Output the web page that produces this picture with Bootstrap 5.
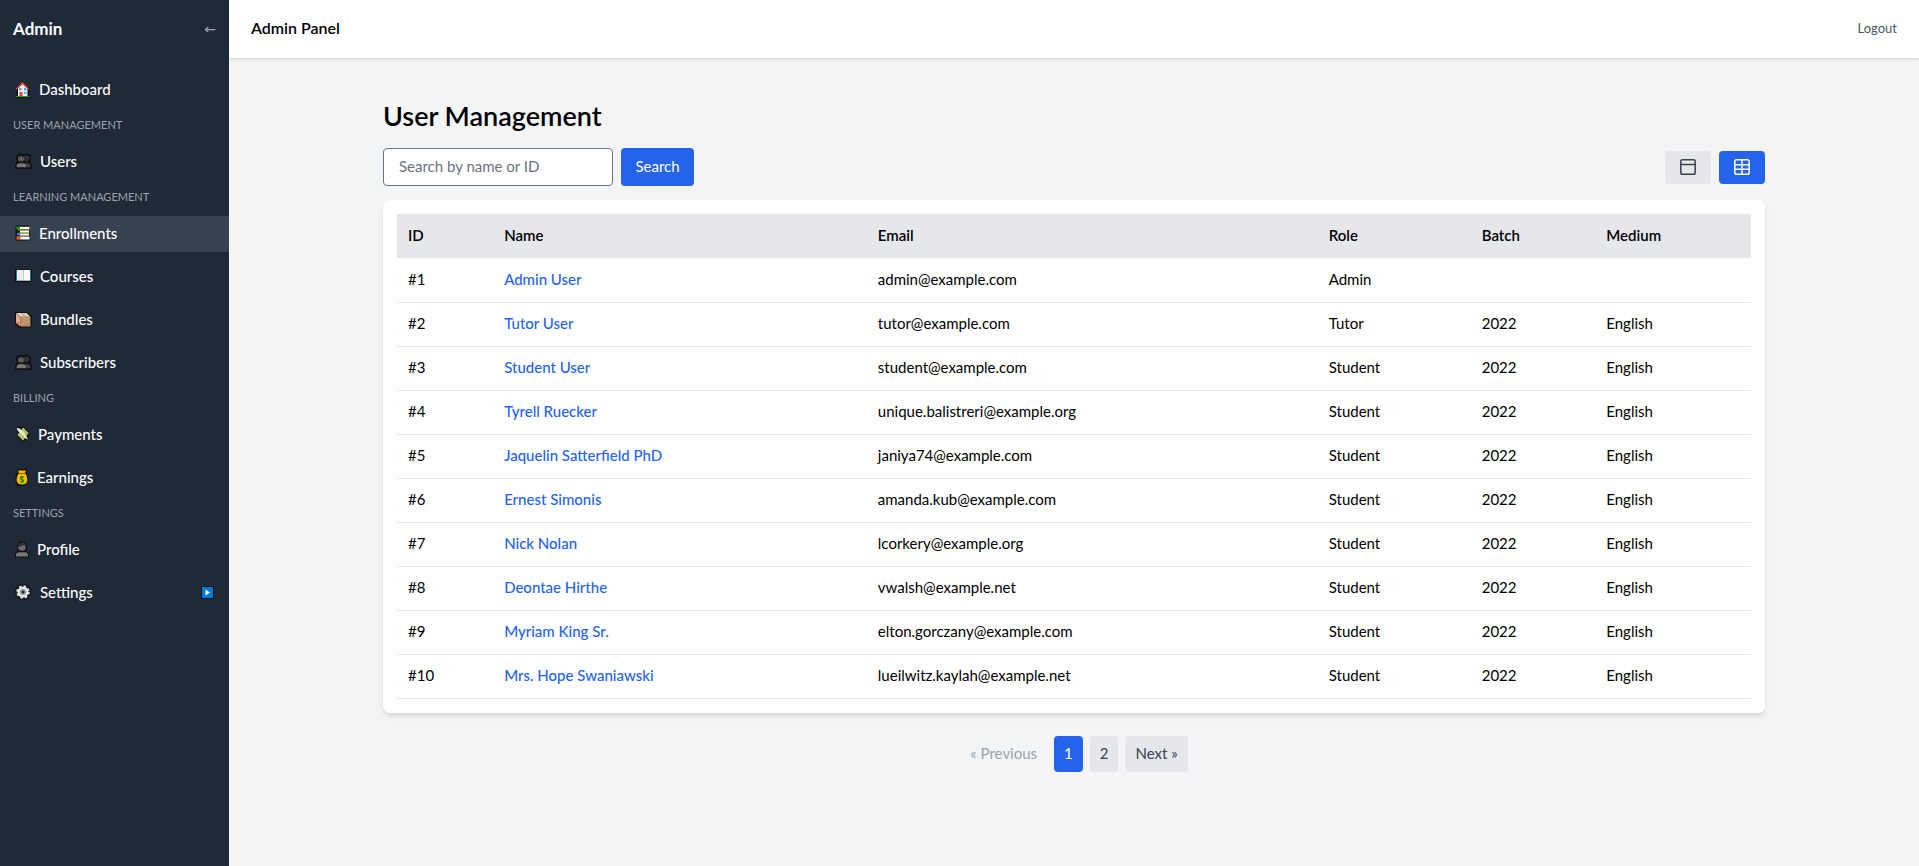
<!DOCTYPE html>
<html lang="en">
<head>
<meta charset="utf-8">
<meta name="viewport" content="width=device-width, initial-scale=1">
<title>Admin Panel</title>
<link href="https://cdn.jsdelivr.net/npm/bootstrap@5.3.0/dist/css/bootstrap.min.css" rel="stylesheet">
<style>
  body { font-family: Lato, "Liberation Sans", sans-serif; font-size: 15px; line-height: 22px; color: #000; background: #f3f4f6; }
  a { text-decoration: none; }
  .side { width: 229px; background: #1f2937; }
  .side-head { height: 57px; padding: 0 13px; }
  .side-head strong { font-size: 17px; }
  .collapse-btn { border: 0; padding: 0; background: none; color: #9ca3af; font-family: "DejaVu Sans", sans-serif; font-size: 14px; }
  .side-nav { gap: 7px; padding-top: 15px; }
  .side-link { height: 36px; padding: 0 15px 2px; color: #fff; font-weight: 500; }
  .side-link:hover, .side-link.active { background: #374151; }
  .side-link svg { flex: none; margin-right: 8px; }
  .side-link .side-caret { margin: 0 0 0 auto; }
  .side-label { height: 22px; padding: 0 13px 2px; font-size: 11px; color: #9ca3af; text-transform: uppercase; }
  .top { height: 58px; padding: 0 22px 2px; background: #fff; box-shadow: 0 1px 3px rgba(0,0,0,.1), 0 1px 2px rgba(0,0,0,.06); }
  .top h1 { font-size: 16px; font-weight: 600; }
  .logout { border: 0; padding: 0; background: none; font-size: 13px; color: #4b5563; }
  .page { max-width: 1382px; padding-top: 41px; }
  .page h2 { font-size: 27px; line-height: 34px; font-weight: 600; margin-bottom: 15px; }
  .tools { margin-bottom: 14px; }
  .tools form, .toggles { gap: 8px; }
  .search-box { width: 230px; height: 38px; padding: 0 15px 2px; font-size: 15px; border: 1px solid #6b7280; border-radius: 4px; }
  .search-box::placeholder { color: #6b7280; }
  .search-btn { width: 73px; height: 38px; padding: 0 0 2px; font-size: 15px; border-radius: 4px; }
  .fill-blue, .fill-blue:hover { background: #2563eb; color: #fff; }
  .fill-gray, .fill-gray:hover { background: #e5e7eb; color: #374151; }
  .toggles .btn { width: 46px; height: 33px; padding: 0; border: 0; border-radius: 4px; }
  .panel { padding: 14px; background: #fff; border-radius: 7px; box-shadow: 0 4px 6px -1px rgba(0,0,0,.1), 0 2px 4px -2px rgba(0,0,0,.1); }
  .users { table-layout: fixed; width: 100%; }
  .users th, .users td { height: 44px; padding: 0 11px 2px; }
  .users th { background: #e5e7eb; font-weight: 600; }
  .users td { border-bottom: 1px solid #e5e7eb; }
  .users a { color: #2563eb; font-weight: 500; }
  .pages { gap: 7px; margin-top: 23px; }
  .pages a, .pages span { display: block; padding: 6px 10px 8px; border-radius: 4px; }
  .pages .off { color: #9ca3af; }
  .c-id { width: 7.1%; } .c-name { width: 27.6%; } .c-mail { width: 33.3%; } .c-role { width: 11.3%; } .c-batch { width: 9.2%; }
</style>
</head>
<body>
<svg width="0" height="0" class="position-absolute" aria-hidden="true">
  <symbol id="people" viewBox="0 0 17 16">
    <path d="M1 15v-2.500Q1 9.800 4 9.500Q1.800 7.800 2 4.500Q2.300 1.600 5.500 1.500Q7.500 1.300 8.800 2.200Q14.500 0 15 4.500Q15.300 8 13.500 9.500Q16 10 16 12.500V15Z" fill="#161616" stroke="#0b0b0b" stroke-width="1.500"/>
    <path d="M9.500 14.300v-2Q9.500 10.300 12.500 10.300Q15.400 10.300 15.400 12.500v1.800Z" fill="#444"/>
    <circle cx="11.500" cy="5.300" r="3" fill="#333"/>
    <path d="M1.600 14.300v-1.600Q1.600 10.600 4 10.300h4.500Q11 10.600 11 12.700v1.600Z" fill="#777"/>
    <circle cx="6" cy="5.800" r="3" fill="#6a6a6a"/>
    <path d="M3 5Q4 2 6.500 2.500T9 5L6 3.800Z" fill="#333"/>
    <path d="M4.800 5.300v1M7.200 5.300v1M5 7.700h2" stroke="#222" stroke-width=".8"/>
  </symbol>
</svg>
<div class="d-flex min-vh-100">
  <aside class="side flex-shrink-0">
    <div class="side-head d-flex align-items-center justify-content-between text-white">
      <strong>Admin</strong>
      <button class="collapse-btn" type="button" aria-label="Collapse sidebar">←</button>
    </div>
    <nav class="side-nav d-flex flex-column">
      <a class="side-link d-flex align-items-center" href="#"><svg width="16" height="17" viewBox="0 0 16 17"><path d="M7.500 0L0 7.500 1.500 9v6H.5v2h14.500v-2h-1V9L15 7.500Z" fill="#101010"/><path d="M7.500 3L3 7.500V15h9.500V7.500Z" fill="#eee"/><path d="M1.200 8L7.500 1.700 13.800 8" fill="none" stroke="#e8483c" stroke-width="1.400"/><path d="M4 7h2.500v2.500H4zM9 7h2.500v2.500H9zM9 11h2.500v2H9z" fill="#37b8ee"/><path d="M4.500 11h3v4h-3z" fill="#e73b2f"/><path d="M1 15.500h13.500" stroke="#16a51c"/></svg>Dashboard</a>
      <div class="side-label d-flex align-items-center">User Management</div>
      <a class="side-link d-flex align-items-center" href="#"><svg width="17" height="16"><use href="#people"/></svg>Users</a>
      <div class="side-label d-flex align-items-center">Learning Management</div>
      <a class="side-link d-flex align-items-center active" href="#" aria-current="page"><svg width="16" height="16" viewBox="0 0 16 16"><rect x=".5" y=".5" width="14.500" height="15" rx="1.500" fill="#111"/><path d="M1.500 1.500h4v3h-4z" fill="#11a51b"/><path d="M5 1.800h9.500v2.400H5z" fill="#fff"/><path d="M3 5h11.500M3 8.200h11.500" stroke="#a5c817" stroke-width="1"/><path d="M5 5.600h9v2H5z" fill="#fff"/><path d="M2 8h3v2.500H2z" fill="#2486d8"/><path d="M5 8.800h9v1.800H5z" fill="#fff"/><path d="M1.500 11.300H6v3.400H1.500z" fill="#f05a1a"/><path d="M5.500 11.500h9v3h-9z" fill="#fff"/></svg>Enrollments</a>
      <a class="side-link d-flex align-items-center" href="#"><svg width="17" height="16" viewBox="0 0 17 16"><path d="M0 1.500h17v12.500H10l-1.500.8L7 14H0Z" fill="#101010"/><path d="M1 2.500h15v10.500H1z" fill="#2676a8"/><path d="M2 2h6.500v10.500H2z" fill="#ececec"/><path d="M8.500 2H15v10.500H8.500z" fill="#fff"/><path d="M8.200 3l.3 10 .3-10z" fill="#aaa"/></svg>Courses</a>
      <a class="side-link d-flex align-items-center" href="#"><svg width="17" height="17" viewBox="0 0 17 17"><path d="M0 1h11.500L17 5v10l-2 1.500H4.500L0 13Z" fill="#101010"/><path d="M1 2.500L5.500 6v9.500L1 12Z" fill="#e4a983"/><path d="M1 2h10.500l4 3.700H5.500Z" fill="#f2d0b2"/><path d="M5.500 6h10v9.500h-10z" fill="#bd946c"/><path d="M5.500 2l4 3.700h2.500L8 2z" fill="#a9b0ac"/><path d="M2.500 10.500l1.200 1v1.500l-1.200-1z" fill="#e2231a"/><path d="M12.500 14l1.500-1v1z" fill="#5a4630"/></svg>Bundles</a>
      <a class="side-link d-flex align-items-center" href="#"><svg width="17" height="16"><use href="#people"/></svg>Subscribers</a>
      <div class="side-label d-flex align-items-center">Billing</div>
      <a class="side-link d-flex align-items-center" href="#"><svg width="15" height="16" viewBox="0 0 15 16"><path d="M1 1h5l2-.5L14 6v8h-3l-3 2-6-6 .5-3Z" fill="#101010"/><path d="M8 1.500L13.500 7 8 14.500 2.500 9Z" fill="#c5d977"/><path d="M8 3.500L11.500 7 8 12 4.500 9Z" fill="none" stroke="#819c3d" stroke-width=".8"/><path d="M1.500 2Q5 1.500 7 4.500L13.500 13.500Q9 12.500 8 9L4.500 6.500Q2.500 5 1.500 2Z" fill="#f0f0e8"/></svg>Payments</a>
      <a class="side-link d-flex align-items-center" href="#"><svg width="14" height="17" viewBox="0 0 14 17"><path d="M2 0h10v4Q13.500 7 13.500 11T7 17 .5 11 3 4Z" fill="#101010"/><path d="M3 1.500h8L10 4q2.500 3 2.500 7Q12 15.500 7 15.500T1.500 11Q1.500 7 4 4Z" fill="#fdb900"/><path d="M4 4.500h6" stroke="#8f5a00" stroke-width=".9"/><path d="M9 8.200Q7 7 5.700 8.200T7 10.500t1.500 2Q7 13.800 5 12.700M7 6.800v7" fill="none" stroke="#188f20" stroke-width="1.200"/></svg>Earnings</a>
      <div class="side-label d-flex align-items-center">Settings</div>
      <a class="side-link d-flex align-items-center" href="#"><svg width="14" height="17" viewBox="0 0 14 17"><path d="M0 16.500V13q0-2 3-2.500Q1.500 8.500 1.800 4.500 3 .5 7 .5t5 4Q12.500 8 11 10.500q3 .5 3 2.500v3.500Z" fill="#111"/><circle cx="7" cy="6" r="3.800" fill="#6c6c6c"/><path d="M3 6Q3 1.800 7 1.700T11 6Q9 3.500 7.500 4.500T3 6Z" fill="#333"/><path d="M1 15.500V13q.5-1.500 3-1.700h6q2.500.2 3 1.700v2.500Z" fill="#777"/></svg>Profile</a>
      <a class="side-link d-flex align-items-center" href="#"><svg width="17" height="16" viewBox="0 0 17 16"><circle cx="8" cy="8" r="6.200" fill="none" stroke="#101010" stroke-width="3.600" stroke-dasharray="3.600 1.270"/><circle cx="8" cy="8" r="6.300" fill="#101010"/><circle cx="8" cy="8" r="5.900" fill="none" stroke="#ddd" stroke-width="1.800" stroke-dasharray="2.500 2.130"/><circle cx="8" cy="8" r="4.300" fill="#999" stroke="#e6e6e6" stroke-width="2.400"/><circle cx="8" cy="8" r="1.500" fill="#1f2937"/></svg>Settings<svg class="side-caret" width="13" height="13" viewBox="0 0 13 13"><path d="M0 0h13v13H0z" fill="#0a1420"/><path d="M1 1h11v11H1z" fill="#0078d7"/><path d="M4.500 3.500L9 6.500l-4.500 3z" fill="#fff"/></svg></a>
    </nav>
  </aside>
  <div class="flex-grow-1">
    <header class="top d-flex align-items-center justify-content-between">
      <h1 class="m-0">Admin Panel</h1>
      <button class="logout" type="button">Logout</button>
    </header>
    <main class="page mx-auto">
      <h2>User Management</h2>
      <div class="tools d-flex align-items-center justify-content-between">
        <form class="d-flex">
          <input class="search-box" type="text" placeholder="Search by name or ID" aria-label="Search by name or ID">
          <button class="btn search-btn fill-blue border-0" type="button">Search</button>
        </form>
        <div class="toggles d-flex">
          <button class="btn fill-gray d-flex align-items-center justify-content-center" type="button" aria-label="Card view"><svg width="16" height="16" viewBox="0 0 16 16" fill="none" stroke="currentColor" stroke-width="1.500"><rect x=".8" y=".8" width="14.400" height="14.400" rx="1.800"/><path d="M1 5.500h14"/></svg></button>
          <button class="btn fill-blue d-flex align-items-center justify-content-center" type="button" aria-label="Table view"><svg width="16" height="16" viewBox="0 0 16 16" fill="none" stroke="currentColor" stroke-width="1.500"><rect x=".8" y=".8" width="14.400" height="14.400" rx="1.800"/><path d="M1 5.700h14M1 10.300h14M8 1v14"/></svg></button>
        </div>
      </div>
      <div class="panel">
        <table class="users">
          <colgroup><col class="c-id"><col class="c-name"><col class="c-mail"><col class="c-role"><col class="c-batch"><col></colgroup>
          <thead><tr><th>ID</th><th>Name</th><th>Email</th><th>Role</th><th>Batch</th><th>Medium</th></tr></thead>
          <tbody>
            <tr><td>#1</td><td><a href="#">Admin User</a></td><td>admin@example.com</td><td>Admin</td><td></td><td></td></tr>
            <tr><td>#2</td><td><a href="#">Tutor User</a></td><td>tutor@example.com</td><td>Tutor</td><td>2022</td><td>English</td></tr>
            <tr><td>#3</td><td><a href="#">Student User</a></td><td>student@example.com</td><td>Student</td><td>2022</td><td>English</td></tr>
            <tr><td>#4</td><td><a href="#">Tyrell Ruecker</a></td><td>unique.balistreri@example.org</td><td>Student</td><td>2022</td><td>English</td></tr>
            <tr><td>#5</td><td><a href="#">Jaquelin Satterfield PhD</a></td><td>janiya74@example.com</td><td>Student</td><td>2022</td><td>English</td></tr>
            <tr><td>#6</td><td><a href="#">Ernest Simonis</a></td><td>amanda.kub@example.com</td><td>Student</td><td>2022</td><td>English</td></tr>
            <tr><td>#7</td><td><a href="#">Nick Nolan</a></td><td>lcorkery@example.org</td><td>Student</td><td>2022</td><td>English</td></tr>
            <tr><td>#8</td><td><a href="#">Deontae Hirthe</a></td><td>vwalsh@example.net</td><td>Student</td><td>2022</td><td>English</td></tr>
            <tr><td>#9</td><td><a href="#">Myriam King Sr.</a></td><td>elton.gorczany@example.com</td><td>Student</td><td>2022</td><td>English</td></tr>
            <tr><td>#10</td><td><a href="#">Mrs. Hope Swaniawski</a></td><td>lueilwitz.kaylah@example.net</td><td>Student</td><td>2022</td><td>English</td></tr>
          </tbody>
        </table>
      </div>
      <nav class="pages d-flex justify-content-center" aria-label="Pages">
        <span class="off">« Previous</span>
        <a class="fill-blue" href="#" aria-current="page">1</a>
        <a class="fill-gray" href="#">2</a>
        <a class="fill-gray" href="#">Next »</a>
      </nav>
    </main>
  </div>
</div>
<script src="https://cdn.jsdelivr.net/npm/bootstrap@5.3.0/dist/js/bootstrap.bundle.min.js"></script>
</body>
</html>
